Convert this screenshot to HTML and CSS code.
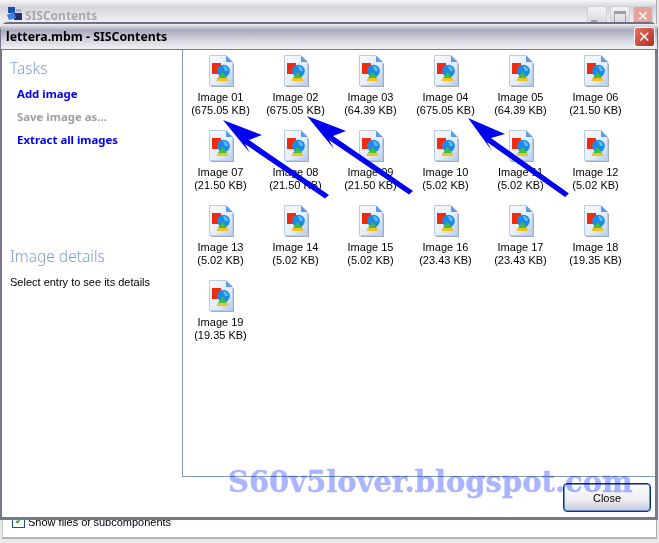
FILE: index.html
```html
<!DOCTYPE html>
<html>
    <head>
        <meta charset="utf-8" />
        <title>lettera.mbm - SISContents</title>
        <link rel="stylesheet" href="styles.css">
    </head>

    <body>
        <svg class="defs" width="0" height="0">
            <defs>
                <linearGradient id="page_fill" x1="0" y1="0" x2="1" y2="1">
                    <stop offset="0" stop-color="#f8fafe" />
                    <stop offset="0.6" stop-color="#e4edfa" />
                    <stop offset="1" stop-color="#b4ccf0" />
                </linearGradient>
                <symbol id="file_icon" viewBox="0 0 27 33">
                    <path d="M3 2H19L26 9V32H3Z" fill="#a4acbc" />
                    <path d="M1.5 .5H18L24.5 7V30.5H1.5Z" fill="url(#page_fill)" stroke="#b8cce8" />
                    <path d="M18 .5V7H24.5Z" fill="#5f9ae6" />
                    <rect x="4" y="8" width="9" height="11" fill="#f02c10" />
                    <circle cx="15.5" cy="16" r="6.3" fill="#1e8ae8" />
                    <path d="M15 11A5 5 0 0 1 20 16H17Z" fill="#58c0f4" />
                    <path d="M14.5 17L19 23H10Z" fill="#3fbf3a" />
                    <path d="M9.5 23H19.5L20.5 26H8.5Z" fill="#f4c21c" />
                </symbol>
            </defs>
        </svg>

        <!-- window behind the dialog -->
        <div class="back_window">
            <div class="back_title">
                <svg class="app_icon" width="17" height="16" viewBox="0 0 17 16">
                    <rect x="2" y="1" width="7" height="6" fill="#1a4fb0" />
                    <rect x="8" y="7" width="8" height="7" fill="#20336e" />
                    <path d="M1 9L8 6L10 12L3 14Z" fill="#3c7fe0" />
                    <rect x="10" y="3" width="5" height="3" fill="#9fb4d8" />
                </svg>
                <span class="back_name">SISContents</span>
                <span class="back_btn"><i class="min_mark"></i></span>
                <span class="back_btn"><i class="max_mark"></i></span>
                <span class="back_btn back_close">&#10005;</span>
            </div>
            <div class="back_body">
                <label class="show_files"><span class="check">&#10004;</span>Show files of subcomponents</label>
            </div>
        </div>

        <div class="dialog">
            <div class="title_bar">
                <span class="title_text">lettera.mbm - SISContents</span>
                <span class="close_x">&#10005;</span>
            </div>
            <div class="dialog_body">
                <div class="main_row">
                    <div class="sidebar">
                        <div class="heading">Tasks</div>
                        <a class="task">Add image</a>
                        <a class="task disabled">Save image as...</a>
                        <a class="task">Extract all images</a>
                        <div class="heading details_heading">Image details</div>
                        <div class="details_text">Select entry to see its details</div>
                    </div>
                    <div class="tiles">
                        <div class="tile"><svg><use href="#file_icon" /></svg>Image 01<br />(675.05 KB)</div>
                        <div class="tile"><svg><use href="#file_icon" /></svg>Image 02<br />(675.05 KB)</div>
                        <div class="tile"><svg><use href="#file_icon" /></svg>Image 03<br />(64.39 KB)</div>
                        <div class="tile"><svg><use href="#file_icon" /></svg>Image 04<br />(675.05 KB)</div>
                        <div class="tile"><svg><use href="#file_icon" /></svg>Image 05<br />(64.39 KB)</div>
                        <div class="tile"><svg><use href="#file_icon" /></svg>Image 06<br />(21.50 KB)</div>
                        <div class="tile"><svg><use href="#file_icon" /></svg>Image 07<br />(21.50 KB)</div>
                        <div class="tile"><svg><use href="#file_icon" /></svg>Image 08<br />(21.50 KB)</div>
                        <div class="tile"><svg><use href="#file_icon" /></svg>Image 09<br />(21.50 KB)</div>
                        <div class="tile"><svg><use href="#file_icon" /></svg>Image 10<br />(5.02 KB)</div>
                        <div class="tile"><svg><use href="#file_icon" /></svg>Image 11<br />(5.02 KB)</div>
                        <div class="tile"><svg><use href="#file_icon" /></svg>Image 12<br />(5.02 KB)</div>
                        <div class="tile"><svg><use href="#file_icon" /></svg>Image 13<br />(5.02 KB)</div>
                        <div class="tile"><svg><use href="#file_icon" /></svg>Image 14<br />(5.02 KB)</div>
                        <div class="tile"><svg><use href="#file_icon" /></svg>Image 15<br />(5.02 KB)</div>
                        <div class="tile"><svg><use href="#file_icon" /></svg>Image 16<br />(23.43 KB)</div>
                        <div class="tile"><svg><use href="#file_icon" /></svg>Image 17<br />(23.43 KB)</div>
                        <div class="tile"><svg><use href="#file_icon" /></svg>Image 18<br />(19.35 KB)</div>
                        <div class="tile"><svg><use href="#file_icon" /></svg>Image 19<br />(19.35 KB)</div>
                    </div>
                </div>
                <div class="button_row">
                    <button class="close_button">Close</button>
                </div>
            </div>
        </div>

        <!-- annotations drawn on top of the screenshot -->
        <svg class="arrows" width="659" height="543" viewBox="0 0 659 543">
            <g fill="#0000f0">
                <path d="M223 120L262 135L249 140L329 195L325 198.5L245 144L250 153Z" />
                <path d="M307 116L346 131L333 136L413 191L409 194.5L329 140L334 149Z" />
                <path d="M468 118L505 134L491 138L569 193.5L565 197L487 142L492 151Z" />
            </g>
        </svg>
        <div class="watermark">S60v5lover.blogspot.com</div>
    </body>
</html>
```

FILE: styles.css
```css
body {
    margin: 0px;
    padding: 0px;
    width: 659px;
    height: 543px;
    position: relative;
    overflow: hidden;
    background-color: #e8e8e8;
    font-family: 'Liberation Sans', sans-serif;
    font-size: 11px;
    color: black;
}

.defs {
    position: absolute;
}

.back_window {
    display: flex;
    flex-direction: column;
    width: 656px;
    height: 539px;
    border-right: 1px solid #b0b0b0;
}

.back_title {
    display: flex;
    align-items: flex-start;
    height: 28px;
    padding: 6px 3px 0px 6px;
    box-sizing: border-box;
    background: linear-gradient(#f6f6f8, #d4d4dc 25%, #ececf0 70%);
}

.app_icon {
    margin-right: 2px;
}

.back_name {
    flex: 1;
    color: #a8a8ae;
    font-family: 'Noto Sans', sans-serif;
    font-size: 12px;
    font-weight: bold;
    line-height: 20px;
}

.back_btn {
    width: 20px;
    height: 20px;
    margin-left: 3px;
    border: 1px solid #d0d0d8;
    border-radius: 3px;
    box-sizing: border-box;
    background: linear-gradient(#f4f4f6, #d4d4dc);
    text-align: center;
}

.min_mark {
    display: block;
    width: 6px;
    height: 3px;
    margin: 13px 0px 0px 3px;
    background-color: #a0a0a8;
}

.max_mark {
    display: block;
    width: 10px;
    height: 9px;
    margin: 4px auto 0px;
    border: 1px solid #a0a0a8;
    border-top-width: 3px;
}

.back_close {
    background: #e4a49a;
    color: white;
    font-size: 14px;
    line-height: 18px;
}

.back_body {
    flex: 1;
    display: flex;
    align-items: flex-end;
    margin-left: 2px;
    padding: 0px 0px 9px 9px;
    background-color: white;
    border-left: 1px solid #c8c8c8;
    border-bottom: 2px solid #b4b4b8;
}

.show_files {
    display: flex;
    align-items: center;
}

.check {
    width: 11px;
    height: 11px;
    margin-right: 3px;
    border: 1px solid #1c5180;
    color: #21a121;
    font-size: 9px;
    line-height: 11px;
    text-align: center;
}

.dialog {
    position: absolute;
    left: 0px;
    top: 22px;
    width: 658px;
    height: 498px;
    display: flex;
    flex-direction: column;
    box-sizing: border-box;
    border: 1px solid #77778e;
    border-top: 2px solid #6e6e88;
    border-radius: 8px 8px 0px 0px;
    background-color: white;
}

.title_bar {
    display: flex;
    align-items: center;
    height: 25px;
    padding: 0px 2px 0px 5px;
    border-bottom: 1px solid #77778e;
    background: linear-gradient(#eeeef2, #a9a9bc 25%, #d0d0dc 60%, #f2f2f6);
}

.title_text {
    flex: 1;
    font-family: 'Noto Sans', sans-serif;
    font-size: 12.3px;
    font-weight: bold;
}

.close_x {
    width: 21px;
    height: 20px;
    border: 1px solid white;
    border-radius: 3px;
    box-sizing: border-box;
    background: linear-gradient(135deg, #e8705c, #b02c2c);
    color: white;
    font-size: 15px;
    line-height: 18px;
    text-align: center;
}

.dialog_body {
    flex: 1;
    display: flex;
    flex-direction: column;
    border-left: 1px solid #77778e;
    border-right: 2px solid #77778e;
    border-bottom: 2px solid #77778e;
}

.main_row {
    flex: 1;
    display: flex;
}

.sidebar {
    width: 180px;
    padding: 8px 0px 0px 8px;
    box-sizing: border-box;
}

.heading {
    color: #7b9ed8;
    font-family: 'Noto Sans', sans-serif;
    font-size: 15.5px;
    font-weight: 300;
    line-height: 20px;
}

.task {
    display: block;
    margin: 8px 0px 0px 7px;
    color: #0000f0;
    font-family: 'Noto Sans', sans-serif;
    font-size: 11.4px;
    font-weight: bold;
    line-height: 15px;
}

.task.disabled {
    color: #a0a0a0;
}

.details_heading {
    margin-top: 99px;
}

.details_text {
    margin-top: 9px;
    line-height: 15px;
}

.tiles {
    flex: 1;
    display: grid;
    grid-template-columns: repeat(6, 75px);
    grid-auto-rows: 75px;
    align-content: start;
    border-left: 1px solid #7f9db9;
    border-bottom: 1px solid #7f9db9;
    padding-top: 5px;
}

.tile {
    display: flex;
    flex-direction: column;
    align-items: center;
    text-align: center;
    line-height: 13px;
}

.tile svg {
    width: 27px;
    height: 33px;
    margin: 0px 0px 3px 1px;
}

.button_row {
    display: flex;
    justify-content: flex-end;
    height: 40px;
    padding: 6px 4px 0px 0px;
    box-sizing: border-box;
}

.close_button {
    width: 88px;
    height: 29px;
    border: 1px solid #003c74;
    border-radius: 4px;
    box-shadow: inset 0px 0px 0px 1px #6f8fc0;
    background: linear-gradient(#ffffff, #ececf2 60%, #c4c8de);
    font-family: 'Liberation Sans', sans-serif;
    font-size: 11px;
    color: black;
}

.arrows {
    position: absolute;
    left: 0px;
    top: 0px;
}

.watermark {
    position: absolute;
    left: 228px;
    top: 465px;
    color: #aab4ff;
    font-family: 'DejaVu Serif', serif;
    font-size: 29px;
    font-weight: bold;
    -webkit-text-stroke: 0.4px #aab4ff;
    mix-blend-mode: multiply;
}
```
